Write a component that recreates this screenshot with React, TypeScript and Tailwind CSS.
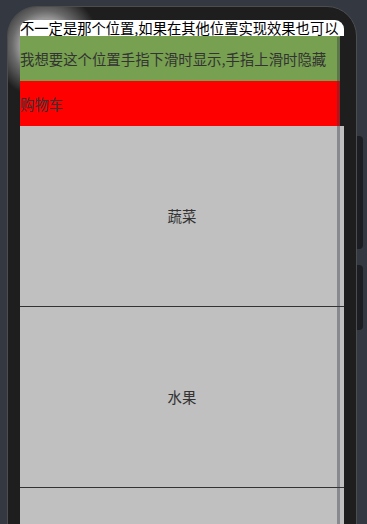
const cjk = { fontFamily: '"Noto Sans CJK SC", "Noto Sans", sans-serif' };

const categories = ['蔬菜', '水果', '肉禽', '海鲜'];

export default function App() {
  return (
    <div className="h-[524px] w-[367px] overflow-hidden bg-[#343841]" style={cjk}>
      <div className="flex items-start pl-[7px] pt-[6px]">
        {/* phone body */}
        <div className="w-[350px] h-[620px] shrink-0 rounded-[30px] border border-[#4d4d4f] bg-[radial-gradient(circle_at_38px_38px,#1e1e1e_0px,#1e1e1e_12px,#9a9a9a_26px,#6a6a6a_34px,#1e1e1e_54px)] px-[12px] pt-[13px]">
          <div className="relative h-full overflow-hidden rounded-t-[9px] bg-[#1e1e1e]">
            <div className="h-[16px] bg-white text-[14.3px] leading-[16px] text-black whitespace-nowrap">
              不一定是那个位置,如果在其他位置实现效果也可以
            </div>

            <div className="relative">
              <div className="flex h-[45px] w-[320px] items-center bg-[#77a050] text-[14.4px] text-[#333333] whitespace-nowrap">
                我想要这个位置手指下滑时显示,手指上滑时隐藏
              </div>
              <div className="flex h-[45px] w-[320px] items-center bg-[#ff0000] text-[14.4px] text-[#333333]">
                购物车
              </div>
              {categories.map((name) => (
                <div
                  key={name}
                  className="flex h-[181px] items-center justify-center border-b border-[#333333] bg-[#c0c0c0] text-[14.4px] text-[#333333]"
                >
                  {name}
                </div>
              ))}

              {/* scrollbar */}
              <div className="absolute left-[317px] top-[1px] bottom-0 w-[3px] bg-[rgba(50,55,68,0.4)]" />
            </div>
          </div>
        </div>

        {/* side buttons */}
        <div className="mt-[130px] flex flex-col gap-[16px]">
          <div className="h-[113px] w-[6px] rounded-r-[4px] bg-[#1d1e23]" />
          <div className="h-[65px] w-[6px] rounded-r-[4px] bg-[#1d1e23]" />
        </div>
      </div>
    </div>
  );
}
